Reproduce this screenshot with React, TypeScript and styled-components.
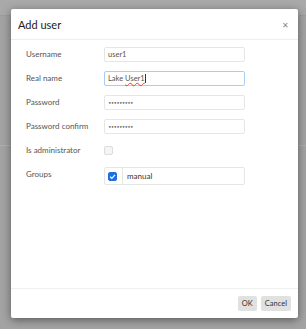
import React from 'react';
import styled, { createGlobalStyle } from 'styled-components';

const GlobalStyle = createGlobalStyle`
  html, body {
    margin: 0;
    padding: 0;
    font-family: Lato, "Open Sans", sans-serif;
  }
`;

const Backdrop = styled.div`
  width: 306px;
  height: 329px;
  box-sizing: border-box;
  padding: 9px 8px 11px 11px;
  background:
    linear-gradient(#a9a9a9 0 15px, #9c9c9c 15px 16px, transparent 16px),
    linear-gradient(transparent 145px, #b0b0b0 145px 146px, transparent 146px),
    #a3a3a3;
`;

const Dialog = styled.div`
  width: 287px;
  height: 309px;
  background: #fff;
  border-radius: 2px;
  box-shadow: 0 2px 8px rgba(0, 0, 0, 0.45);
  display: flex;
  flex-direction: column;
`;

const Header = styled.div`
  height: 30px;
  flex: none;
  display: flex;
  align-items: center;
  justify-content: space-between;
  padding: 0 9px 0 7px;
  border-bottom: 1px solid #eeeeee;
`;

const Title = styled.div`
  font-size: 11px;
  color: #222;
  padding-top: 1px;
`;

const Close = styled.div`
  font-size: 8px;
  color: #888;
  line-height: 1;
  padding-top: 2px;
`;

const Body = styled.div`
  flex: 1;
  padding: 7px 0 0 15px;
  display: grid;
  grid-template-columns: 78px 141px;
  grid-auto-rows: min-content;
  row-gap: 9px;
`;

const Label = styled.div`
  font-size: 8px;
  line-height: 15px;
  color: #555;
`;

const Field = styled.div<{ focused?: boolean }>`
  height: 15px;
  box-sizing: border-box;
  border: 1px solid ${p => (p.focused ? '#a9cdf1' : '#e6e6e6')};
  border-radius: 2px;
  padding-left: 3px;
  font-size: 7.5px;
  color: #555;
  display: flex;
  align-items: center;
  white-space: pre;
`;

const Misspelled = styled.span`
  text-decoration: underline wavy #e0403a;
  text-decoration-thickness: 1px;
  text-underline-offset: 1px;
`;

const Caret = styled.span`
  display: inline-block;
  width: 1px;
  height: 9px;
  background: #333;
`;

const Dots = styled.span`
  font-family: "DejaVu Sans", sans-serif;
  font-size: 6px;
  letter-spacing: -0.8px;
  color: #666;
`;

const CheckCell = styled.div`
  height: 15px;
  display: flex;
  align-items: center;
`;

const Check = styled.span<{ checked?: boolean }>`
  width: 9px;
  height: 9px;
  box-sizing: border-box;
  border-radius: 2px;
  border: 1px solid ${p => (p.checked ? '#1a6fe6' : '#dcdcdc')};
  background: ${p => (p.checked ? '#1a6fe6' : '#f5f5f5')};
  display: flex;
  align-items: center;
  justify-content: center;
`;

const GroupBox = styled.div`
  height: 18px;
  box-sizing: border-box;
  border: 1px solid #e6e6e6;
  border-radius: 2px;
  display: flex;
`;

const GroupCheck = styled.div`
  width: 18px;
  flex: none;
  box-sizing: border-box;
  padding-left: 3px;
  border-right: 1px solid #e6e6e6;
  display: flex;
  align-items: center;
`;

const GroupName = styled.div`
  font-size: 8px;
  color: #333;
  padding-left: 4px;
  display: flex;
  align-items: center;
`;

const Footer = styled.div`
  height: 29px;
  flex: none;
  border-top: 1px solid #f0f0f0;
  display: flex;
  align-items: center;
  justify-content: flex-end;
  gap: 4px;
  padding-right: 7px;
`;

const Button = styled.button`
  height: 15px;
  padding: 0 4px;
  min-width: 18px;
  border: none;
  border-radius: 2px;
  background: #e1e1e1;
  color: #333;
  font-family: inherit;
  font-size: 7.5px;
`;

const Tick = () => (
  <svg width="7" height="7" viewBox="0 0 10 10">
    <path d="M1.5 5.2 L4 7.6 L8.6 2.6" fill="none" stroke="#fff" strokeWidth="1.8" />
  </svg>
);

export default function App() {
  return (
    <>
      <GlobalStyle />
      <Backdrop>
        <Dialog>
          <Header>
            <Title>Add user</Title>
            <Close>✕</Close>
          </Header>
          <Body>
            <Label>Username</Label>
            <Field>user1</Field>

            <Label>Real name</Label>
            <Field focused>
              Lake <Misspelled>User1</Misspelled>
              <Caret />
            </Field>

            <Label>Password</Label>
            <Field><Dots>•••••••••</Dots></Field>

            <Label>Password confirm</Label>
            <Field><Dots>•••••••••</Dots></Field>

            <Label>Is administrator</Label>
            <CheckCell><Check /></CheckCell>

            <Label>Groups</Label>
            <GroupBox>
              <GroupCheck>
                <Check checked><Tick /></Check>
              </GroupCheck>
              <GroupName>manual</GroupName>
            </GroupBox>
          </Body>
          <Footer>
            <Button>OK</Button>
            <Button>Cancel</Button>
          </Footer>
        </Dialog>
      </Backdrop>
    </>
  );
}
